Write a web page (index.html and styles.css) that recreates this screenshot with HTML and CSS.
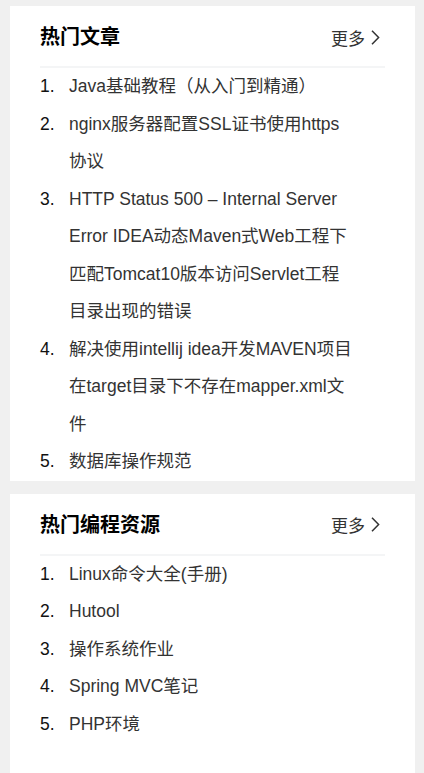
FILE: index.html
```html
<!DOCTYPE html>
<html lang="zh-CN">
<head>
<meta charset="utf-8">
<title>热门</title>
<link rel="stylesheet" href="styles.css">
</head>
<body>
<div class="page">
  <section class="card">
    <div class="card-head">
      <h2 class="card-title">热门文章</h2>
      <a class="more" href="#">更多<svg class="chev" width="9" height="15" viewBox="0 0 9 15"><path d="M1 0.8 L7.6 7.5 L1 14.2" fill="none" stroke="#333" stroke-width="1.5"/></svg></a>
    </div>
    <ol class="rank">
      <li><a href="#">Java基础教程（从入门到精通）</a></li>
      <li><a href="#">nginx服务器配置SSL证书使用https协议</a></li>
      <li><a href="#">HTTP Status 500 – Internal Server Error IDEA动态Maven式Web工程下匹配Tomcat10版本访问Servlet工程目录出现的错误</a></li>
      <li><a href="#">解决使用intellij idea开发MAVEN项目在target目录下不存在mapper.xml文件</a></li>
      <li><a href="#">数据库操作规范</a></li>
    </ol>
  </section>
  <section class="card card-last">
    <div class="card-head">
      <h2 class="card-title">热门编程资源</h2>
      <a class="more" href="#">更多<svg class="chev" width="9" height="15" viewBox="0 0 9 15"><path d="M1 0.8 L7.6 7.5 L1 14.2" fill="none" stroke="#333" stroke-width="1.5"/></svg></a>
    </div>
    <ol class="rank">
      <li><a href="#">Linux命令大全(手册)</a></li>
      <li><a href="#">Hutool</a></li>
      <li><a href="#">操作系统作业</a></li>
      <li><a href="#">Spring MVC笔记</a></li>
      <li><a href="#">PHP环境</a></li>
    </ol>
  </section>
</div>
</body>
</html>
```
FILE: styles.css
```css
html, body {
  margin: 0;
  padding: 0;
  background: #f0f0f0;
  font-family: "Liberation Sans", Arial, "Noto Sans CJK SC", sans-serif;
}
.page {
  display: flex;
  flex-direction: column;
  gap: 13px;
  padding: 6px 9px 0 10px;
}
.card {
  background: #fff;
  padding: 0 30px;
}
.card-last {
  padding-bottom: 40px;
}
.card-head {
  box-sizing: border-box;
  height: 62px;
  padding-top: 2px;
  border-bottom: 2px solid #f4f5f6;
  display: flex;
  align-items: center;
  justify-content: space-between;
}
.card-title {
  margin: 0;
  font-size: 20px;
  font-weight: bold;
  color: #000;
  line-height: 1;
}
.more {
  display: flex;
  align-items: center;
  gap: 6px;
  font-size: 17px;
  color: #333;
  text-decoration: none;
  margin-right: 5px;
}
.chev {
  display: block;
}
.rank {
  list-style: none;
  margin: 0;
  padding: 0 31px 0 0;
  counter-reset: item;
}
.rank li {
  display: flex;
  font-size: 17.5px;
  line-height: 37.5px;
  counter-increment: item;
}
.rank li::before {
  content: counter(item) ".";
  flex: 0 0 29px;
  color: #111;
}
.rank a {
  color: #333;
  text-decoration: none;
}
```
